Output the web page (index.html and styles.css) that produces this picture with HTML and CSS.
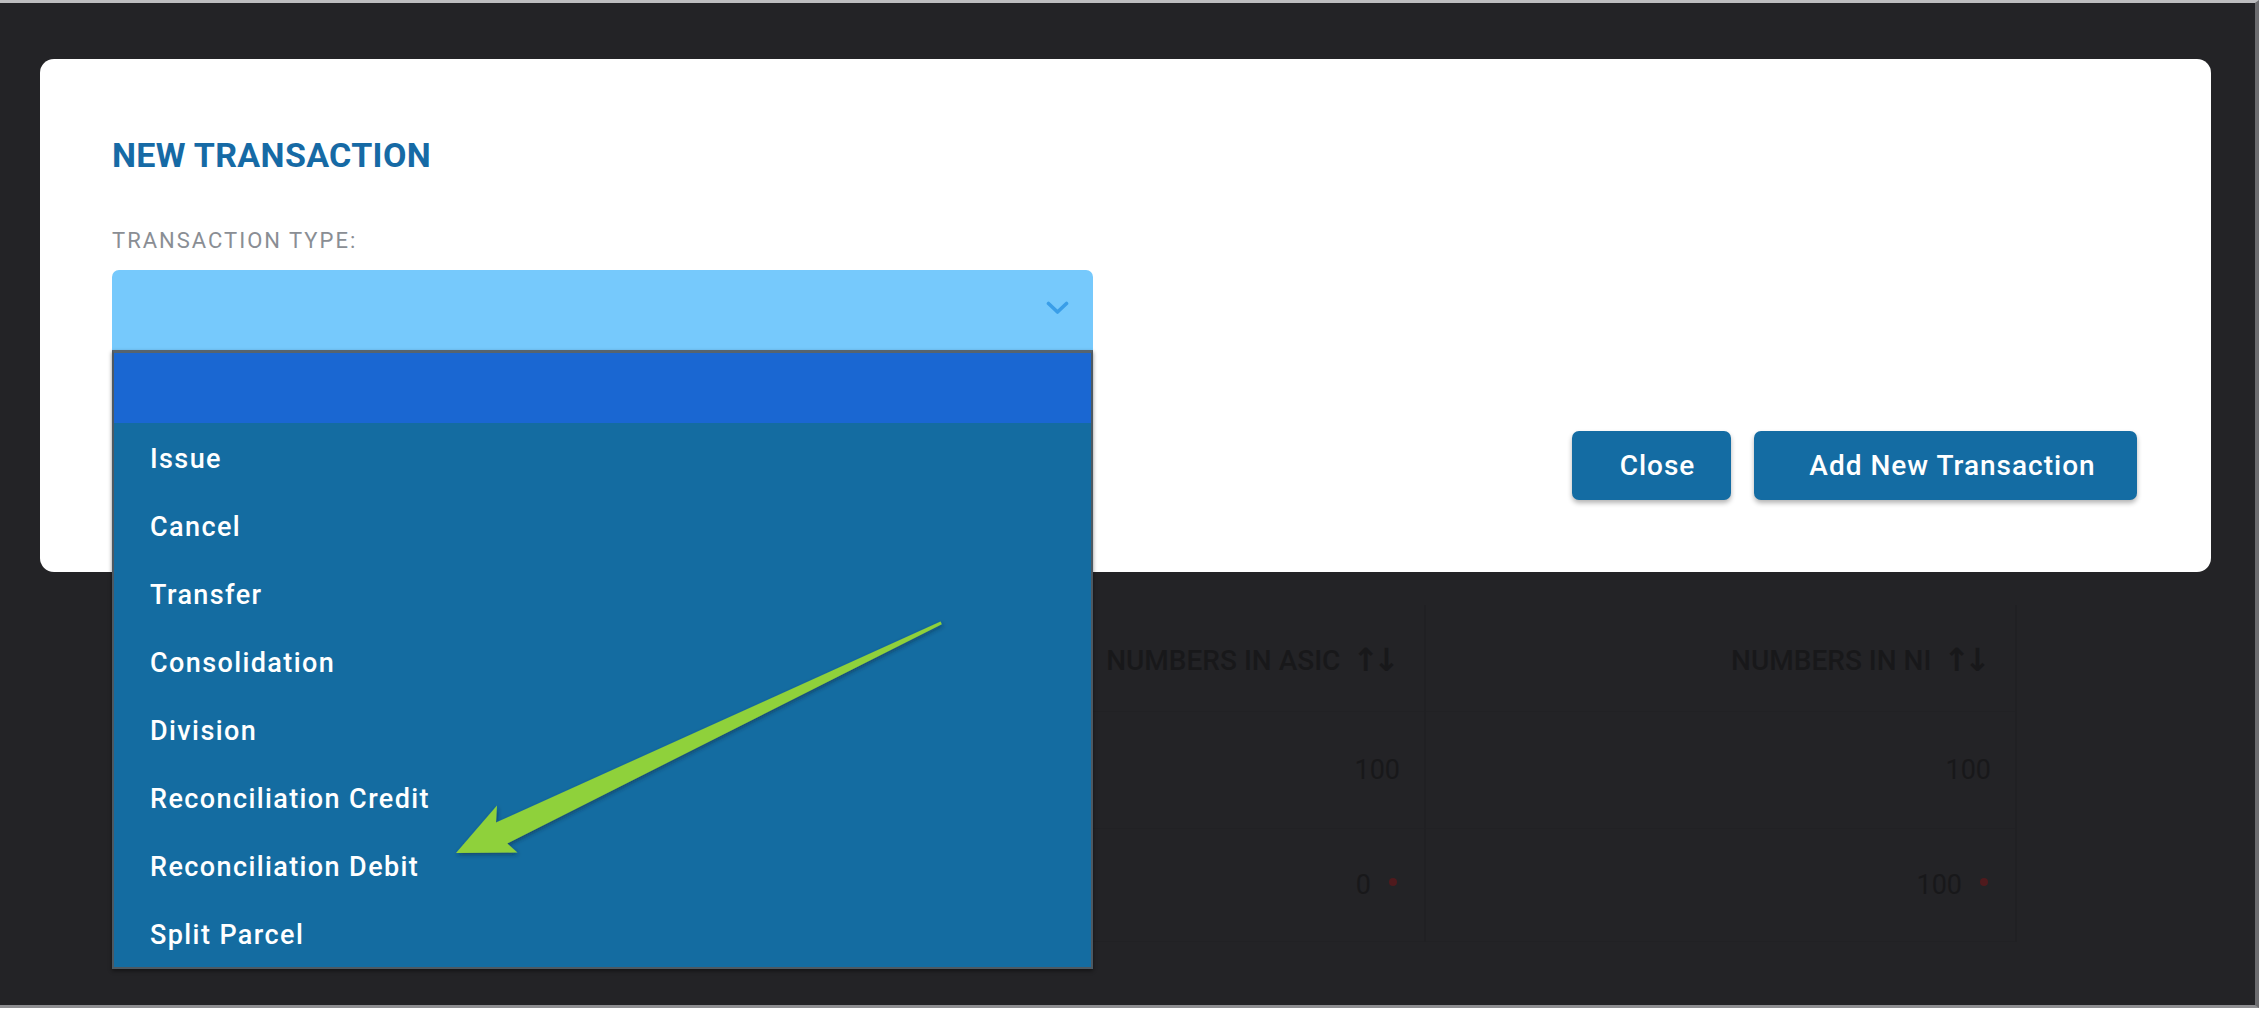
FILE: index.html
```html
<!DOCTYPE html>
<html lang="en">
<head>
<meta charset="utf-8">
<title>New Transaction</title>
<link rel="stylesheet" href="styles.css">
</head>
<body>
<div class="frame">
  <div class="modal">
    <h2 class="modal-title">NEW TRANSACTION</h2>
    <div class="field-label">TRANSACTION TYPE:</div>
    <div class="select-wrap">
      <div class="select">
        <svg class="chevron" width="23" height="14" viewBox="0 0 23 14"><polyline points="2.5,2.5 11.5,11 20.5,2.5" fill="none" stroke="#3a9ee8" stroke-width="3.6" stroke-linecap="round" stroke-linejoin="round"/></svg>
      </div>
      <ul class="dropdown">
        <li class="opt opt-active"></li>
        <li class="opt">Issue</li>
        <li class="opt">Cancel</li>
        <li class="opt">Transfer</li>
        <li class="opt">Consolidation</li>
        <li class="opt">Division</li>
        <li class="opt">Reconciliation Credit</li>
        <li class="opt">Reconciliation Debit</li>
        <li class="opt">Split Parcel</li>
      </ul>
    </div>
    <div class="modal-footer">
      <button class="btn btn-close">Close</button>
      <button class="btn btn-add">Add New Transaction</button>
    </div>
  </div>

  <div class="table">
    <div class="cell"></div>
    <div class="cell head">NUMBERS IN ASIC <span class="sort">↑↓</span></div>
    <div class="cell head">NUMBERS IN NI <span class="sort">↑↓</span></div>
    <div class="cell cell-last"></div>

    <div class="cell"></div>
    <div class="cell">100</div>
    <div class="cell">100</div>
    <div class="cell cell-last"></div>

    <div class="cell"></div>
    <div class="cell">0<span class="dot"></span></div>
    <div class="cell">100<span class="dot"></span></div>
    <div class="cell cell-last"></div>
  </div>

  <svg class="arrow" width="520" height="270" viewBox="0 0 520 270">
    <defs>
      <filter id="sh" x="-10%" y="-10%" width="120%" height="120%">
        <feDropShadow dx="1" dy="2" stdDeviation="2" flood-color="#0a2a40" flood-opacity="0.55"/>
      </filter>
    </defs>
    <polygon filter="url(#sh)" fill="#8fd13a" points="16,253 57,205.5 56,222.6 500.6,21.5 501.8,24.3 67.3,243.4 77.4,252.5"/>
  </svg>
</div>
</body>
</html>
```
FILE: styles.css
```css
html, body {
  margin: 0;
  padding: 0;
  background: #ffffff;
}

body {
  font-family: Roboto, "Liberation Sans", Arial, sans-serif;
  width: 2259px;
  height: 1017px;
  overflow: hidden;
}

.frame {
  position: relative;
  box-sizing: border-box;
  width: 2259px;
  height: 1008px;
  background: #232326;
  border-top: 3px solid #bdbdbf;
  border-right: 4px solid #6c6c6f;
  border-bottom: 3px solid #8e8e91;
  padding: 56px 0 0 40px;
}

.modal {
  position: relative;
  z-index: 2;
  box-sizing: border-box;
  width: 2171px;
  height: 513px;
  background: #ffffff;
  border-radius: 14px;
  padding: 79px 74px 72px 72px;
  display: flex;
  flex-direction: column;
}

.modal-title {
  margin: 0;
  font-size: 34px;
  line-height: 34px;
  font-weight: 700;
  letter-spacing: 0.35px;
  color: #166aa5;
}

.field-label {
  margin-top: 58px;
  font-size: 22px;
  line-height: 22px;
  letter-spacing: 2px;
  color: #8a8e94;
}

.select-wrap {
  position: relative;
  margin-top: 18px;
  width: 981px;
  height: 80px;
}

.select {
  box-sizing: border-box;
  height: 80px;
  background: #76c9fc;
  border-radius: 7px 7px 0 0;
  display: flex;
  align-items: center;
  justify-content: flex-end;
  padding-right: 24px;
}

.chevron {
  display: block;
  margin-top: -4px;
}

.dropdown {
  position: absolute;
  top: 80px;
  left: 0;
  z-index: 5;
  box-sizing: border-box;
  width: 981px;
  margin: 0;
  padding: 0;
  list-style: none;
  background: #146ca1;
  border-top: 3px solid #56646e;
  border-left: 2px solid #4d5962;
  border-right: 2px solid #4d5962;
  border-bottom: 2px solid #4d5962;
  box-shadow: 0 2px 4px rgba(0, 0, 0, 0.45);
}

.opt {
  box-sizing: border-box;
  height: 68px;
  display: flex;
  align-items: center;
  padding: 4px 0 0 36px;
  color: #ffffff;
  font-size: 27px;
  font-weight: 500;
  letter-spacing: 1.4px;
}

.opt-active {
  height: 70px;
  background: #1a67d2;
}

.modal-footer {
  margin-top: 81px;
  display: flex;
  justify-content: flex-end;
  gap: 23px;
}

.btn {
  height: 69px;
  border: none;
  border-radius: 7px;
  background: #146ca3;
  color: #ffffff;
  font-family: Roboto, "Liberation Sans", Arial, sans-serif;
  font-size: 28px;
  font-weight: 500;
  letter-spacing: 1px;
  box-shadow: 0 3px 5px rgba(0, 0, 0, 0.3);
  cursor: pointer;
}

.btn-close {
  width: 159px;
  padding: 0 34px 0 46px;
}

.btn-add {
  width: 383px;
  padding: 0 38px 0 52px;
}

.table {
  margin-top: 33px;
  margin-left: 72px;
  width: 2099px;
  display: grid;
  grid-template-columns: 723px 591px 591px 194px;
  grid-template-rows: 107px 117px 113px;
  color: #18181a;
  font-size: 27px;
}

.cell {
  box-sizing: border-box;
  display: flex;
  align-items: center;
  justify-content: flex-end;
  padding-right: 24px;
  border-right: 2px solid #202023;
  border-bottom: 1px solid #212124;
}

.cell-last {
  border-right: none;
  border-bottom: none;
}

.head {
  font-size: 28px;
  font-weight: 500;
  text-transform: uppercase;
  padding-top: 4px;
}

.sort {
  font-family: "DejaVu Sans", sans-serif;
  font-size: 32px;
  font-weight: 700;
  letter-spacing: -6px;
  margin-left: 12px;
  margin-right: 6px;
}

.dot {
  display: inline-block;
  width: 8px;
  height: 8px;
  border-radius: 50%;
  background: #4f1a1d;
  margin-left: 18px;
  margin-right: 3px;
  margin-bottom: 6px;
}

.arrow {
  position: absolute;
  left: 440px;
  top: 597px;
  z-index: 10;
}
```
